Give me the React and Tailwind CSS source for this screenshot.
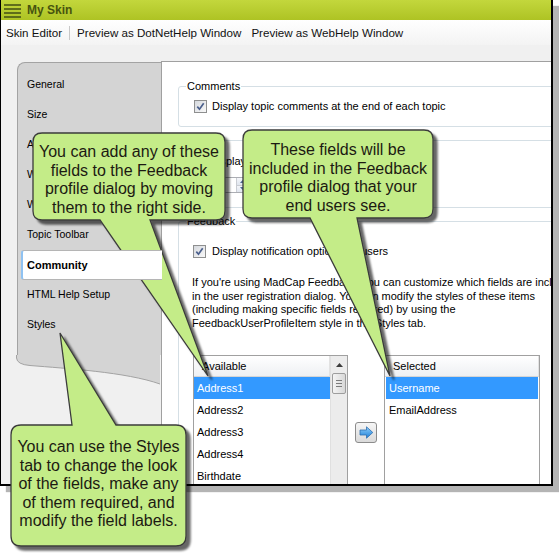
import React from "react";

function Check() {
  return (
    <span className="w-[13px] h-[13px] border border-[#8e8f8f] bg-linear-to-br from-[#d6d9de] to-[#f8f8f8] flex items-center justify-center shrink-0">
      <svg width="9" height="9" viewBox="0 0 9 9">
        <path d="M1.3 4.6 L3.5 7.2 L7.7 1.3" stroke="#4a5f8c" strokeWidth="1.7" fill="none" />
      </svg>
    </span>
  );
}

const tabs = [
  "General",
  "Size",
  "About",
  "WebHelp Setup",
  "WebHelp Toolbar",
  "Topic Toolbar",
  "Community",
  "HTML Help Setup",
  "Styles",
];

function TabPanel() {
  return (
    <div className="w-[144px] shrink-0 flex flex-col mt-[1px]">
      <div className="bg-[#d4d4d4] border-l border-t border-[#a3a3a3] rounded-tl-[8px] pt-[7px] pb-[15px] flex flex-col">
        {tabs.map((t) =>
          t === "Community" ? (
            <div
              key={t}
              className="h-[30px] ml-[3px] -mr-px relative z-10 bg-white border-l-2 border-l-[#8fc2f2] border-y border-y-[#b5b5b5] rounded-l-[3px] flex items-center pl-[4px] text-[11px] font-bold text-black"
            >
              {t}
            </div>
          ) : (
            <div key={t} className="h-[30px] flex items-center pl-[9px] text-[10.5px] text-black">
              {t}
            </div>
          )
        )}
      </div>
      <svg width="144" height="34" viewBox="0 0 144 34" className="block -ml-px">
        <path d="M0.5 0 V3 Q1 9.5 14 10.5 C50 13.5 110 17 144 29 V0 Z" fill="#d4d4d4" />
        <path d="M0.5 0 V3 Q1 9.5 14 10.5 C50 13.5 110 17 144 29" fill="none" stroke="#a3a3a3" strokeWidth="1" />
      </svg>
    </div>
  );
}

function Group({ label, className, children }) {
  return (
    <div className={"relative border border-[#d5dfe5] rounded-[3px] " + className}>
      <span className="absolute left-[7px] top-[-7px] bg-white px-[1px] text-[11px] leading-[13px] text-black">
        {label}
      </span>
      {children}
    </div>
  );
}

function ListHeader({ label }) {
  return (
    <div className="h-[21px] bg-linear-to-b from-white to-[#eef0f3] border-b border-[#d5d5d5] border-r border-r-[#e2e2e2] flex items-center pl-[8px] text-[11px] text-black shrink-0">
      {label}
    </div>
  );
}

function Row({ label, sel }) {
  return (
    <div
      className={
        "h-[22px] flex items-center pl-[3px] text-[11px] shrink-0 " +
        (sel ? "bg-[#3399ff] text-white" : "text-black")
      }
    >
      {label}
    </div>
  );
}

function Content() {
  return (
    <div className="flex-1 min-w-0 bg-white border-l border-t border-[#a0a0a0] overflow-hidden">
      <div className="w-[440px] pl-[16px] pt-[24px] flex flex-col">
        <Group label="Comments" className="h-[41px]">
          <div className="flex items-center gap-[5px] pl-[15px] pt-[13px]">
            <Check />
            <span className="text-[11px] leading-[13px] text-black">
              Display topic comments at the end of each topic
            </span>
          </div>
        </Group>

        <Group label="Search" className="h-[68px] mt-[13px]">
          <div className="pl-[31px] pt-[14px] flex flex-col">
            <span className="text-[11px] leading-[13px] text-black">Display community results</span>
            <div className="mt-[9px] w-[38px] h-[16px] border border-[#abadb3] flex justify-end">
              <div className="w-[11px] border-l border-[#c9ccd2] flex flex-col">
                <div className="flex-1 bg-linear-to-b from-[#f4f6fa] to-[#dfe5ee] flex items-center justify-center border-b border-[#c9ccd2]">
                  <svg width="5" height="3" viewBox="0 0 5 3"><path d="M0 3 L2.5 0 L5 3 Z" fill="#4e6a97" /></svg>
                </div>
                <div className="flex-1 bg-linear-to-b from-[#f4f6fa] to-[#dfe5ee] flex items-center justify-center">
                  <svg width="5" height="3" viewBox="0 0 5 3"><path d="M0 0 L2.5 3 L5 0 Z" fill="#4e6a97" /></svg>
                </div>
              </div>
            </div>
          </div>
        </Group>

        <Group label="Feedback" className="h-[300px] mt-[13px]">
          <div className="flex flex-col pl-[14px]">
            <div className="flex items-center gap-[6px] pt-[23px]">
              <Check />
              <span className="text-[11px] leading-[13px] text-black">
                Display notification options for users
              </span>
            </div>
            <div className="mt-[18px] -ml-px text-[11px] leading-[13.5px] text-black whitespace-nowrap flex flex-col">
              <span>If you're using MadCap Feedback, you can customize which fields are included</span>
              <span>in the user registration dialog. You can modify the styles of these items</span>
              <span>(including making specific fields required) by using the</span>
              <span>FeedbackUserProfileItem style in the Styles tab.</span>
            </div>

            <div className="mt-[25px] flex items-start">
              <div className="w-[155px] h-[150px] border border-[#a0a0a0] flex">
                <div className="flex-1 flex flex-col">
                  <ListHeader label="Available" />
                  <Row label="Address1" sel />
                  <Row label="Address2" />
                  <Row label="Address3" />
                  <Row label="Address4" />
                  <Row label="Birthdate" />
                </div>
                <div className="w-[17px] bg-[#ececec] border-l border-[#e0e0e0] flex flex-col items-center">
                  <div className="h-[17px] w-full flex items-center justify-center">
                    <svg width="7" height="4" viewBox="0 0 7 4"><path d="M0 4 L3.5 0 L7 4 Z" fill="#3c3c3c" /></svg>
                  </div>
                  <div className="w-[14px] h-[21px] rounded-[2px] border border-[#9d9d9d] bg-linear-to-r from-[#f4f4f4] to-[#d8d8d8] flex flex-col items-center justify-center gap-[2px]">
                    <span className="w-[6px] h-px bg-[#7c7c7c]" />
                    <span className="w-[6px] h-px bg-[#7c7c7c]" />
                    <span className="w-[6px] h-px bg-[#7c7c7c]" />
                  </div>
                </div>
              </div>

              <div className="mt-[67px] ml-[7px] w-[22px] h-[21px] border border-[#8c8c8c] rounded-[3px] bg-linear-to-b from-[#f6f6f6] to-[#dadada] flex items-center justify-center">
                <svg width="15" height="13" viewBox="0 0 15 13">
                  <defs>
                    <linearGradient id="ag" x1="0" y1="0" x2="0" y2="1">
                      <stop offset="0" stopColor="#8fd0fb" />
                      <stop offset="1" stopColor="#1f7fd8" />
                    </linearGradient>
                  </defs>
                  <path d="M1 4 H7.5 V0.8 L13.8 6.5 L7.5 12.2 V9 H1 Z" fill="url(#ag)" stroke="#2f6fae" strokeWidth="0.8" />
                </svg>
              </div>

              <div className="ml-[7px] w-[156px] h-[150px] border border-[#a0a0a0] flex flex-col">
                <ListHeader label="Selected" />
                <div className="px-px flex flex-col">
                  <Row label="Username" sel />
                  <Row label="EmailAddress" />
                </div>
              </div>
            </div>
          </div>
        </Group>
      </div>
    </div>
  );
}

function Callouts() {
  return (
    <svg width="559" height="560" viewBox="0 0 559 560" className="absolute left-0 top-0 pointer-events-none">
      <defs>
        <filter id="cs" x="-20%" y="-20%" width="140%" height="140%">
          <feDropShadow dx="4" dy="4" stdDeviation="1.2" floodColor="#000" floodOpacity="0.6" />
        </filter>
      </defs>
      <g fill="#c4ec88" stroke="#3b3b3b" strokeWidth="1.3" filter="url(#cs)">
        <path d="M42 133 H216 Q225 133 225 142 V211 Q225 220 216 220 H150 L208 376 L100 220 H42 Q33 220 33 211 V142 Q33 133 42 133 Z" />
        <path d="M252 130 H424 Q433 130 433 139 V209 Q433 218 424 218 H357 L390 376 L310 218 H252 Q243 218 243 209 V139 Q243 130 252 130 Z" />
        <path d="M21 425 H72 L60 333 L116 425 H176 Q186 425 186 435 V536 Q186 546 176 546 H21 Q11 546 11 536 V435 Q11 425 21 425 Z" />
      </g>
    </svg>
  );
}

function CalloutText({ className, lines }) {
  return (
    <div className={"absolute flex flex-col items-center text-[16px] leading-[18.5px] text-[#1c1a12] " + className}>
      {lines.map((l) => (
        <span key={l} className="whitespace-nowrap">{l}</span>
      ))}
    </div>
  );
}

export default function App() {
  return (
    <div className="relative w-[559px] h-[560px] bg-white overflow-hidden font-['Liberation_Sans',Arial,sans-serif]">
      <div className="w-[553px] h-[486px] border-l border-r-2 border-b-2 border-black shadow-[6px_6px_1px_#b4b4b4] flex flex-col overflow-hidden">
        <div className="h-[20px] shrink-0 flex items-center bg-linear-to-b from-[#c3d73c] to-[#aec323]">
          <svg width="17" height="16" viewBox="0 0 17 16" className="ml-[3px]">
            <g stroke="#4a5716" strokeWidth="1.6">
              <path d="M0 3 H17" />
              <path d="M0 7 H17" />
              <path d="M0 11 H17" />
              <path d="M0 15 H17" />
            </g>
          </svg>
          <span className="ml-[6px] text-[12px] font-bold text-[#47540f]">My Skin</span>
        </div>
        <div className="h-[25px] shrink-0 flex items-center bg-linear-to-b from-white to-[#f3f3f3] text-[11.6px] text-[#111]">
          <span className="ml-[5px]">Skin Editor</span>
          <span className="ml-[7px] w-px h-[14px] bg-[#c8c8c8]" />
          <span className="ml-[7px]">Preview as DotNetHelp Window</span>
          <span className="ml-[10px]">Preview as WebHelp Window</span>
        </div>
        <div className="flex-1 min-h-0 flex bg-[#f0f0f0] pt-[16px] pl-[16px]">
          <TabPanel />
          <Content />
        </div>
      </div>

      <Callouts />
      <CalloutText
        className="left-[33px] w-[192px] top-[143px]"
        lines={["You can add any of these", "fields to the Feedback", "profile dialog by moving", "them to the right side."]}
      />
      <CalloutText
        className="left-[243px] w-[190px] top-[141px]"
        lines={["These fields will be", "included in the Feedback", "profile dialog that your", "end users see."]}
      />
      <CalloutText
        className="left-[11px] w-[175px] top-[438px]"
        lines={["You can use the Styles", "tab to change the look", "of the fields, make any", "of them required, and", "modify the field labels."]}
      />
    </div>
  );
}
